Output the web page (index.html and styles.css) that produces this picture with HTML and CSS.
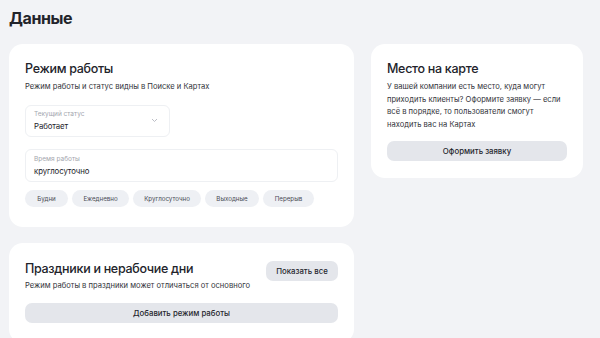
FILE: index.html
```html
<!DOCTYPE html>
<html lang="ru">
<head>
  <meta charset="UTF-8">
  <title>Данные</title>
  <meta name="viewport" content="width=device-width, initial-scale=1.0">
  <link rel="stylesheet" href="styles.css">
</head>
<body>
  <h1 class="page-title">Данные</h1>

  <div class="layout">
    <div class="main-col">
      <section class="card">
        <h2 class="card-title">Режим работы</h2>
        <p class="card-text">Режим работы и статус видны в Поиске и Картах</p>

        <div class="field field-status">
          <div>
            <div class="field-label">Текущий статус</div>
            <div class="field-value">Работает</div>
          </div>
          <svg class="chevron" width="7" height="5" viewBox="0 0 7 5">
            <path d="M1 1l2.5 2.5L6 1" fill="none" stroke="#b4b7bf" stroke-width="0.9"/>
          </svg>
        </div>

        <div class="field">
          <div class="field-label">Время работы</div>
          <div class="field-value">круглосуточно</div>
        </div>

        <div class="chips">
          <span class="chip chip-1">Будни</span>
          <span class="chip chip-2">Ежедневно</span>
          <span class="chip chip-3">Круглосуточно</span>
          <span class="chip chip-4">Выходные</span>
          <span class="chip chip-5">Перерыв</span>
        </div>
      </section>

      <section class="card card-holidays">
        <div class="holidays-head">
          <div>
            <h2 class="card-title">Праздники и нерабочие дни</h2>
            <p class="card-text">Режим работы в праздники может отличаться от основного</p>
          </div>
          <button class="btn btn-small">Показать все</button>
        </div>
        <button class="btn btn-wide">Добавить режим работы</button>
      </section>
    </div>

    <aside class="card card-map">
      <h2 class="card-title">Место на карте</h2>
      <p class="map-text">У вашей компании есть место, куда могут приходить клиенты? Оформите заявку — если всё в порядке, то пользователи смогут находить вас на Картах</p>
      <button class="btn btn-wide">Оформить заявку</button>
    </aside>
  </div>
</body>
</html>
```

FILE: styles.css
```css
* {
  box-sizing: border-box;
  margin: 0;
  padding: 0;
}

body {
  background-color: #f2f3f6;
  font-family: Inter, "Noto Sans", sans-serif;
  color: #22232a;
  padding: 9px 17px 0 9px;
  overflow: hidden;
  height: 338px;
}

.page-title {
  font-size: 16px;
  font-weight: 700;
  line-height: 18px;
  letter-spacing: -0.4px;
  margin-bottom: 17px;
}

.layout {
  display: flex;
  gap: 17px;
  align-items: flex-start;
}

.main-col {
  display: flex;
  flex-direction: column;
  gap: 16px;
  width: 345px;
}

.card {
  background: #fff;
  border-radius: 14px;
  padding: 16px 16px 20px 16px;
}

.card-title {
  font-size: 12.5px;
  font-weight: 500;
  line-height: 16px;
  letter-spacing: -0.3px;
  margin-top: 1px;
}

.card-text {
  font-size: 7.6px;
  line-height: 10px;
  color: #33343b;
  margin-top: 5px;
}

.field {
  border: 1px solid #eef0f3;
  border-radius: 6px;
  padding: 5px 8px 6px 8px;
  margin-top: 12px;
  width: 313px;
  height: 33px;
}

.field-status {
  width: 145px;
  margin-top: 13px;
  display: flex;
  justify-content: space-between;
  align-items: center;
  padding-right: 11px;
  height: 32px;
}

.field-label {
  font-size: 6.5px;
  line-height: 9px;
  color: #a3a6ae;
}

.field-value {
  font-size: 7.8px;
  line-height: 12px;
  letter-spacing: -0.1px;
  color: #22232a;
  margin-top: 1px;
}

.chips {
  display: flex;
  gap: 4px;
  margin-top: 8px;
}

.chip {
  background: #eef0f4;
  border-radius: 9px;
  height: 17px;
  font-size: 6.2px;
  line-height: 17px;
  color: #4a4c54;
  text-align: center;
}

.chip-1 { width: 43px; }
.chip-2 { width: 57px; }
.chip-3 { width: 68px; }
.chip-4 { width: 54px; }
.chip-5 { width: 51px; }

.card-holidays {
  padding-top: 17px;
}

.holidays-head {
  display: flex;
  justify-content: space-between;
  align-items: flex-start;
}

.holidays-head .card-text {
  margin-top: 4px;
}

.btn {
  border: none;
  background: #e4e6eb;
  color: #26272e;
  font-family: inherit;
  font-size: 7.8px;
  font-weight: 500;
  border-radius: 7px;
  cursor: pointer;
}

.btn-small {
  width: 72px;
  height: 20px;
  margin-top: 1px;
}

.btn-wide {
  display: block;
  width: 100%;
  height: 20px;
  margin-top: 12px;
}

.card-map {
  width: 212px;
  padding: 16px 16px 16px 16px;
  height: 134px;
}

.map-text {
  font-size: 7.6px;
  line-height: 12.7px;
  color: #33343b;
  margin-top: 4px;
}

.card-map .btn-wide {
  margin-top: 9px;
}
```
